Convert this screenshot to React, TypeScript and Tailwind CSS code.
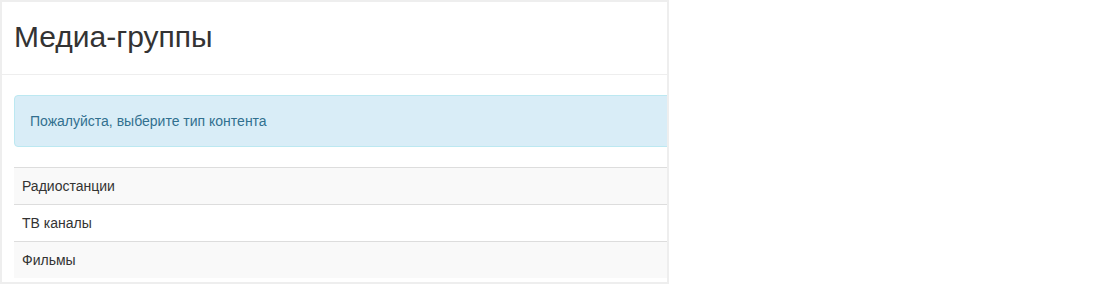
export default function App() {
  const rows = ["Радиостанции", "ТВ каналы", "Фильмы"];
  return (
    <div className="w-[1100px] h-[284px] bg-white" style={{ fontFamily: '"Liberation Sans", Arial, sans-serif' }}>
      <div className="w-[669px] h-[284px] border-2 border-[#eeeeee] bg-white overflow-hidden">
        <div className="pt-[18px] pb-[21px] pl-[12px] border-b border-[#eeeeee]">
          <h1 className="text-[30px] leading-[33px] text-[#333333] font-normal">Медиа-группы</h1>
        </div>
        <div className="pl-[12px] mr-[-20px] pt-[20px]">
          <div className="rounded-[4px] border border-[#bce8f1] bg-[#d9edf7] p-[15px] text-[14px] leading-[20px] text-[#31708f]">
            Пожалуйста, выберите тип контента
          </div>
          <div className="mt-[20px]">
            {rows.map((r, i) => (
              <div
                key={r}
                className={`border-t border-[#dddddd] px-[8px] py-[8px] text-[14px] leading-[20px] text-[#333333] ${i % 2 === 0 ? "bg-[#f9f9f9]" : "bg-white"}`}
              >
                {r}
              </div>
            ))}
          </div>
        </div>
      </div>
    </div>
  );
}
